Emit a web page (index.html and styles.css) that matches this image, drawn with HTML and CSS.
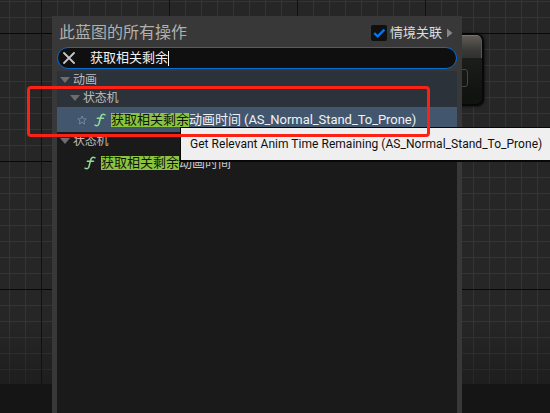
FILE: index.html
```
<!DOCTYPE html>
<html lang="zh-CN">
<head>
<meta charset="utf-8">
<title>蓝图</title>
<link rel="stylesheet" href="styles.css">
</head>
<body>
<div class="editor">
  <div class="graph">
    <div class="node"><div class="node-head"></div><div class="pin"></div></div>
  </div>
  <div class="menu">
    <div class="menu-head">
      <span class="title">此蓝图的所有操作</span>
      <span class="check"><svg width="16" height="16" viewBox="0 0 16 16"><path d="M3.2 8.1L6.7 11.4L13.4 4.6" fill="none" stroke="#0b74ea" stroke-width="2.3"/></svg></span>
      <span class="context">情境关联</span>
      <svg class="more" width="6" height="10" viewBox="0 0 6 10"><path d="M0 0.5L5.5 5L0 9.5Z" fill="#858585"/></svg>
    </div>
    <div class="search">
      <svg class="clear" width="12" height="12" viewBox="0 0 12 12"><path d="M1 1L11 11M11 1L1 11" stroke="#c6c6c6" stroke-width="1.8" stroke-linecap="round"/></svg>
      <span class="query">获取相关剩余</span><span class="caret"></span>
    </div>
    <div class="tree">
      <div class="row cat top"><svg class="arrow" width="10" height="6" viewBox="0 0 10 6"><path d="M0 0H10L5 6Z"/></svg><span>动画</span></div>
      <div class="row cat sub"><svg class="arrow" width="10" height="6" viewBox="0 0 10 6"><path d="M0 0H10L5 6Z"/></svg><span>状态机</span></div>
      <div class="row item selected">
        <svg class="star" width="10" height="10" viewBox="0 0 10 10"><path d="M5 .9L6.2 3.7L9.2 4L6.9 6L7.6 9L5 7.4L2.4 9L3.1 6L.8 4L3.8 3.7Z"/></svg>
        <svg class="func" width="12" height="14" viewBox="0 0 12 14"><path d="M11 1.8C8.6.6 7.3 1.6 6.7 4L5.2 9.8C4.6 12.4 3.2 13.4 1 12.2M3.3 5.2H9.5"/></svg>
        <mark>获取相关剩余</mark><span>动画时间</span><span class="asset">(AS_Normal_Stand_To_Prone)</span>
      </div>
      <div class="row cat second"><svg class="arrow" width="10" height="6" viewBox="0 0 10 6"><path d="M0 0H10L5 6Z"/></svg><span>状态机</span></div>
      <div class="row item plain">
        <svg class="func" width="12" height="14" viewBox="0 0 12 14"><path d="M11 1.8C8.6.6 7.3 1.6 6.7 4L5.2 9.8C4.6 12.4 3.2 13.4 1 12.2M3.3 5.2H9.5"/></svg>
        <mark>获取相关剩余</mark><span>动画时间</span>
      </div>
    </div>
  </div>
  <div class="tooltip"><span>Get Relevant Anim Time Remaining (AS_Normal_Stand_To_Prone)</span></div>
  <div class="highlight"></div>
</div>
</body>
</html>
```
FILE: styles.css
```
* { box-sizing: border-box; }
body { margin: 0; overflow: hidden; font-family: Roboto, "Noto Sans CJK SC", sans-serif; }
svg { display: block; flex: none; }
span, mark { white-space: nowrap; flex: none; }
.editor { position: relative; width: 550px; height: 413px; overflow: hidden; background: #151515; }
.graph {
  position: relative;
  height: 384px;
  background-color: #262626;
  background-image:
    linear-gradient(to bottom, transparent 320px, rgba(20, 20, 20, .45)),
    linear-gradient(to right, #101010 1px, transparent 1px),
    linear-gradient(to bottom, #080808 1px, transparent 1px),
    linear-gradient(to right, #353535 1px, transparent 1px),
    linear-gradient(to bottom, #353535 1px, transparent 1px);
  background-size: 100% 100%, 128px 128px, 128px 128px, 16px 16px, 16px 16px;
  background-position: 0 0, 41px 33px, 41px 33px, 9px 1px, 9px 1px;
}
.node {
  position: absolute; left: 380px; top: 34px; width: 104px; height: 72px;
  border: 1px solid #080808; border-width: 1px 2px 2px 1px; border-radius: 7px;
  background: linear-gradient(#1b1d1b 23px, #10130f 60px); overflow: hidden; box-shadow: 0 0 3px #000;
}
.node-head {
  height: 23px; border-radius: 5px 5px 0 0;
  border-top: 1px solid #77736f; border-right: 1px solid #555;
  background: linear-gradient(#625b55, #393938 65%, #303130);
}
.pin { width: 18px; height: 18px; margin: 11px 0 0 69px; border: 1px solid #454745; border-radius: 3px; }
.menu {
  position: absolute; left: 52px; top: 16px; width: 410px; height: 397px;
  padding: 0 5px; background: #383838; display: flex; flex-direction: column;
}
.menu-head { height: 31px; display: flex; align-items: center; padding: 2px 4px 0 2px; }
.title { font-size: 16px; line-height: 20px; color: #b0b0b0; flex: 1; }
.check { width: 16px; height: 16px; background: #101010; border-radius: 2px; margin-right: 3px; }
.context { font-size: 13px; line-height: 18px; color: #dedede; }
.more { margin-left: 5px; }
.search {
  height: 22px; border: 1px solid #0a6bd0; border-radius: 11px; background: #0f0f0f;
  display: flex; align-items: center; padding-left: 5px;
}
.query { margin-left: 15px; font-size: 13px; line-height: 18px; color: #f2f2f2; }
.caret { width: 1px; height: 15px; background: #fff; }
.tree { flex: 1; margin-top: 2px; background: #1a1a1a; }
.row { display: flex; align-items: center; }
.cat { height: 18px; background: #2c323a; font-size: 12px; line-height: 18px; color: #bdbdbd; padding-left: 3px; }
.cat span { margin-left: 3px; }
.cat.sub { padding-left: 13px; }
.cat.sub span, .cat.second span { letter-spacing: -.2px; }
.cat.second { background: #1a1a1a; }
.arrow { fill: #6d6d6d; }
.item { height: 25px; font-size: 13px; line-height: 18px; color: #c8c8c8; }
.item mark { height: 14px; line-height: 14px; background: #8bc53f; color: #10150c; margin-left: 5px; }
.selected { background: #42566e; padding-left: 20px; color: #f0f2f5; }
.star { fill: none; stroke: #77869a; stroke-width: 1; }
.func { fill: none; stroke: #91dc96; stroke-width: 1.5; stroke-linecap: round; }
.selected .func { margin-left: 7px; }
.plain { padding-left: 27px; }
.asset { margin-left: 3px; font-size: 13px; letter-spacing: -.05px; }
.tooltip {
  position: absolute; left: 180px; top: 127px; width: 380px; height: 35px;
  padding-left: 9px; background: #efefef; border: 1px solid #080808; border-bottom-width: 2px;
  display: flex; align-items: center; color: #101010; font-size: 12px; line-height: 16px; letter-spacing: .03px;
}
.highlight {
  position: absolute; left: 27px; top: 86px; width: 403px; height: 51px;
  border: 3px solid #fb2114; border-radius: 4px;
}
```
